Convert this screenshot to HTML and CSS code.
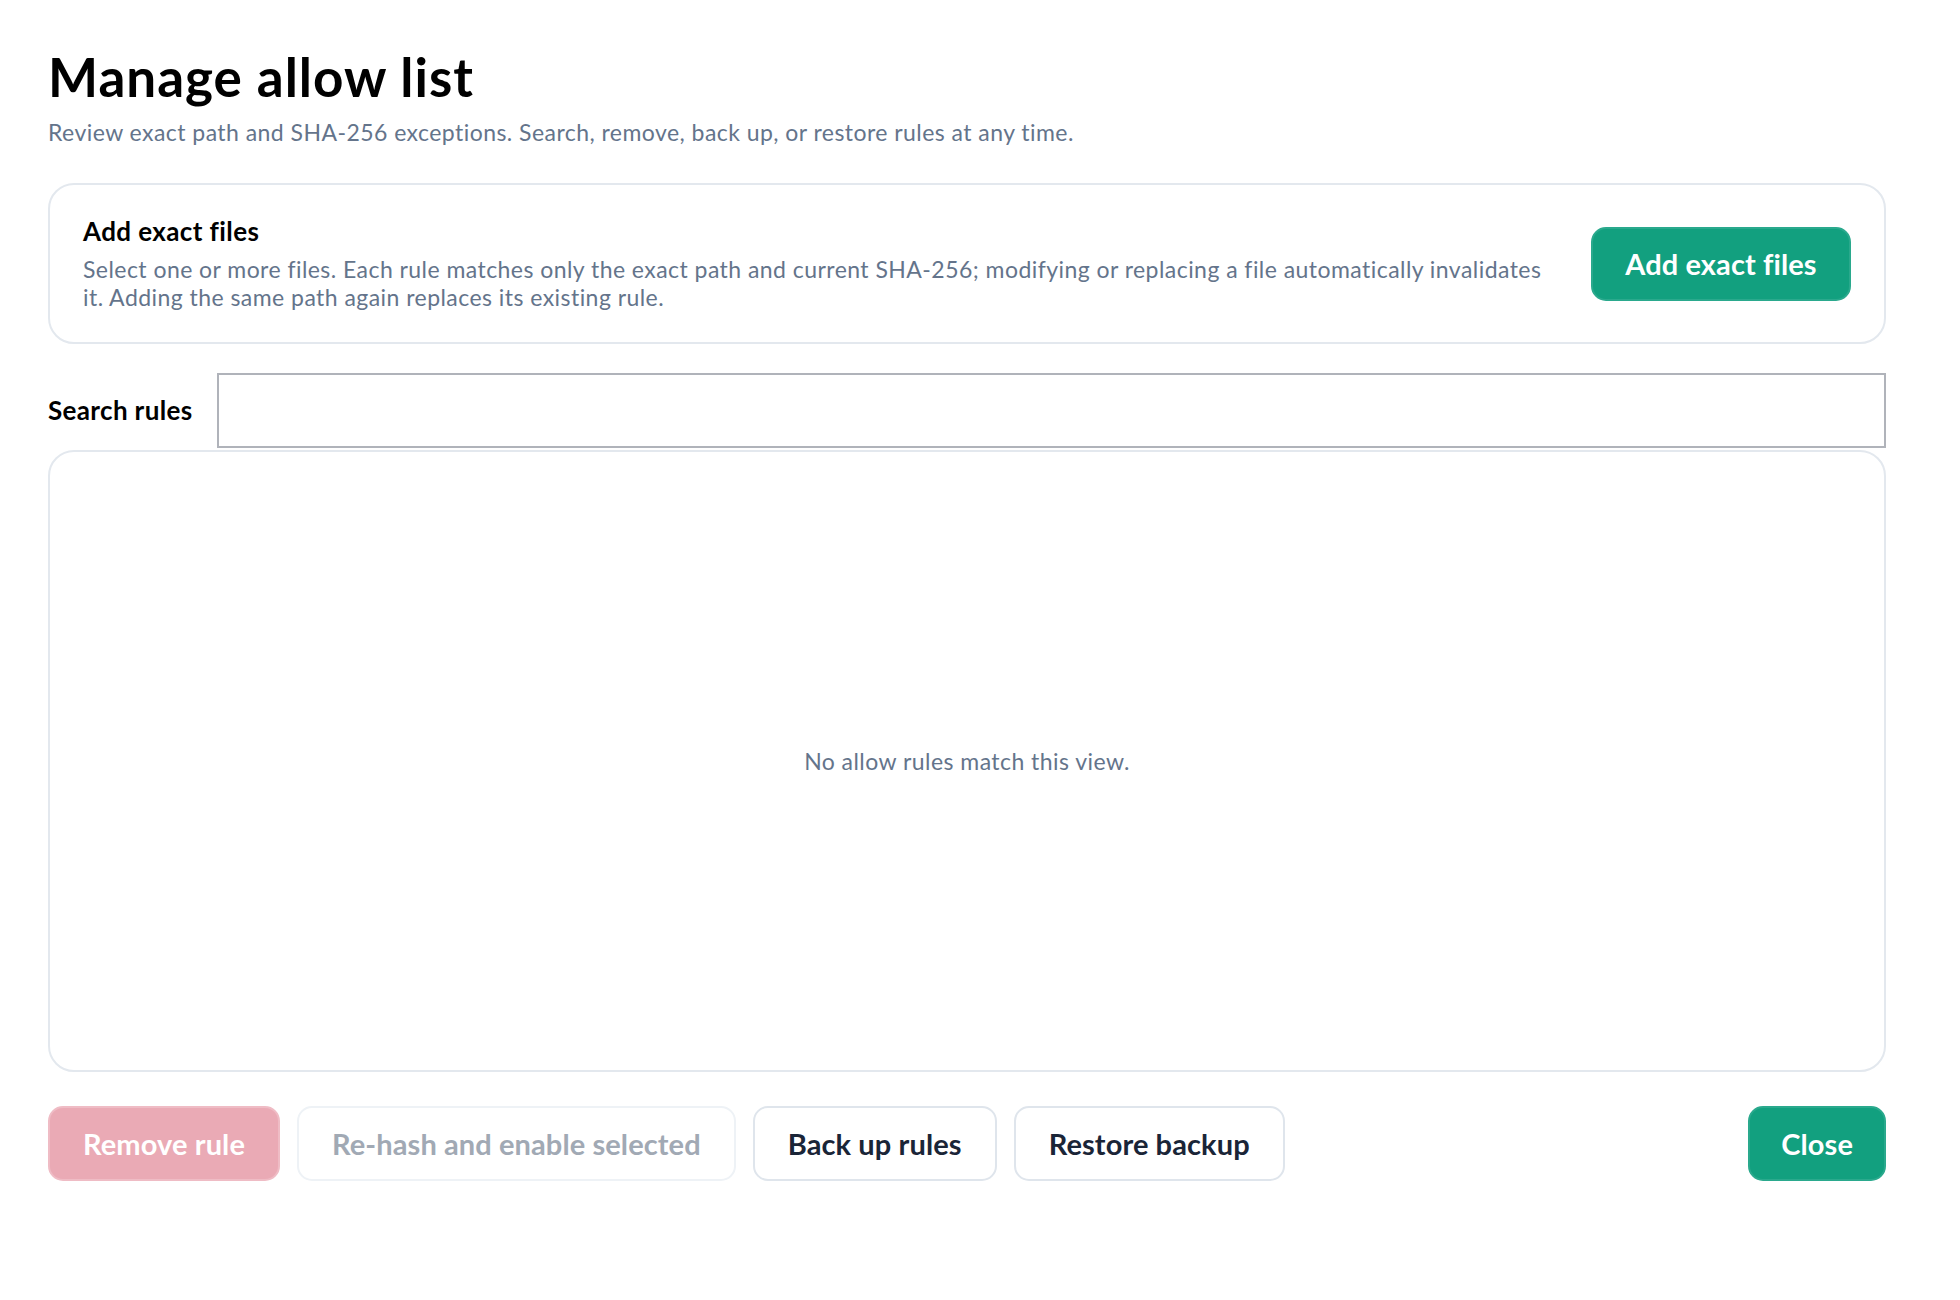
FILE: index.html
```html
<!DOCTYPE html>
<html lang="en">
<head>
<meta charset="utf-8">
<title>Manage allow list</title>
<link rel="stylesheet" href="styles.css">
</head>
<body>
<main class="page">
  <h1 class="title">Manage allow list</h1>
  <p class="subtitle">Review exact path and SHA-256 exceptions. Search, remove, back up, or restore rules at any time.</p>

  <section class="add-card">
    <div class="add-text">
      <h2 class="add-heading">Add exact files</h2>
      <p class="add-desc">Select one or more files. Each rule matches only the exact path and current SHA-256; modifying or replacing a file automatically invalidates it. Adding the same path again replaces its existing rule.</p>
    </div>
    <button class="btn btn-primary btn-add" type="button">Add exact files</button>
  </section>

  <div class="search-row">
    <label class="search-label" for="search">Search rules</label>
    <input class="search-input" id="search" type="text">
  </div>

  <section class="rule-list">
    <p class="empty">No allow rules match this view.</p>
  </section>

  <div class="actions">
    <button class="btn btn-danger" type="button">Remove rule</button>
    <button class="btn btn-disabled" type="button" disabled>Re-hash and enable selected</button>
    <button class="btn btn-outline" type="button">Back up rules</button>
    <button class="btn btn-outline" type="button">Restore backup</button>
    <span class="spacer"></span>
    <button class="btn btn-primary btn-close" type="button">Close</button>
  </div>
</main>
</body>
</html>
```

FILE: styles.css
```css
* {
  box-sizing: border-box;
}

html, body {
  margin: 0;
  padding: 0;
  background: #ffffff;
}

body {
  font-family: Lato, "Open Sans", "Noto Sans", sans-serif;
  color: #000000;
}

.page {
  width: 1838px;
  margin-left: 48px;
  padding-top: 46px;
  display: flex;
  flex-direction: column;
}

.title {
  margin: 0;
  font-size: 53px;
  line-height: 62px;
  font-weight: 700;
  letter-spacing: 1px;
  color: #000000;
}

.subtitle {
  margin: 10px 0 0;
  font-size: 23px;
  line-height: 28px;
  letter-spacing: 0.45px;
  color: #64748b;
}

.add-card {
  margin-top: 37px;
  border: 2px solid #e3e8ee;
  border-radius: 26px;
  padding: 31px 33px;
  display: flex;
  align-items: center;
  gap: 32px;
}

.add-text {
  flex: 1;
  min-width: 0;
}

.add-heading {
  margin: 0;
  font-size: 26px;
  line-height: 30px;
  font-weight: 700;
  letter-spacing: 0.4px;
}

.add-desc {
  margin: 9px 0 0;
  font-size: 23px;
  line-height: 28px;
  letter-spacing: 0.45px;
  color: #64748b;
}

.btn {
  height: 75px;
  padding: 0 33px;
  border-radius: 15px;
  border: 2px solid #dfe5ec;
  background: #ffffff;
  font-family: Lato, "Open Sans", "Noto Sans", sans-serif;
  font-size: 29px;
  font-weight: 700;
  letter-spacing: 0.1px;
  color: #1a2537;
  white-space: nowrap;
  flex: none;
}

.btn-primary {
  background: #12a07f;
  border-color: #2aa98d;
  color: #ffffff;
}

.btn-add {
  width: 260px;
  height: 74px;
  padding: 0;
}

.btn-close {
  padding: 0 31px;
}

.btn-danger {
  background: #eaaab5;
  border-color: #efbcc5;
  color: #ffffff;
}

.btn-disabled {
  background: #ffffff;
  border-color: #eef2f6;
  color: #a1a9b4;
}

.btn-outline {
  background: #ffffff;
  border-color: #dfe5ec;
  color: #1a2537;
}

.search-row {
  margin-top: 29px;
  display: flex;
  align-items: center;
  gap: 25px;
}

.search-label {
  font-size: 26px;
  line-height: 30px;
  font-weight: 700;
  letter-spacing: 0.35px;
  color: #000000;
  flex: none;
  position: relative;
  top: -1px;
}

.search-input {
  flex: 1;
  height: 75px;
  margin: 0;
  border: 2px solid #b0b3ba;
  border-radius: 0;
  background: #ffffff;
  font-family: inherit;
  font-size: 22px;
  padding: 0 14px;
  outline: none;
}

.rule-list {
  margin-top: 2px;
  height: 622px;
  border: 2px solid #e3e8ee;
  border-radius: 26px;
  display: flex;
  align-items: center;
  justify-content: center;
}

.empty {
  margin: 0;
  font-size: 23px;
  line-height: 28px;
  letter-spacing: 0.45px;
  color: #64748b;
}

.actions {
  margin-top: 34px;
  display: flex;
  align-items: center;
  gap: 17px;
}

.spacer {
  flex: 1;
}
```
